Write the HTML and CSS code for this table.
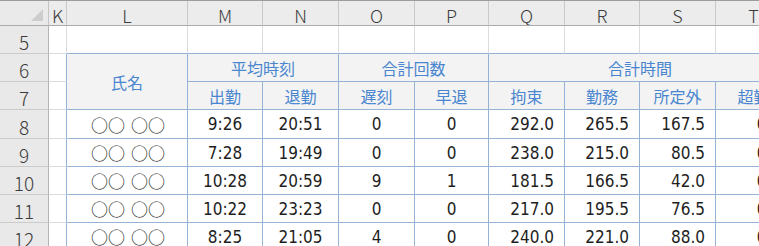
FILE: index.html
```html
<!DOCTYPE html>
<html lang="ja">
<head>
<meta charset="utf-8">
<title>勤怠集計</title>
<link rel="stylesheet" href="styles.css">
</head>
<body>
<div class="sheet">
  <div class="corner"><span class="tri"></span></div>
  <div class="colhead">K</div>
  <div class="colhead">L</div>
  <div class="colhead">M</div>
  <div class="colhead">N</div>
  <div class="colhead">O</div>
  <div class="colhead">P</div>
  <div class="colhead">Q</div>
  <div class="colhead">R</div>
  <div class="colhead">S</div>
  <div class="colhead">T</div>

  <div class="rowhead">5</div>
  <div class="cell"></div>
  <div class="cell top"></div>
  <div class="cell top"></div>
  <div class="cell top"></div>
  <div class="cell top"></div>
  <div class="cell top"></div>
  <div class="cell top"></div>
  <div class="cell top"></div>
  <div class="cell top"></div>
  <div class="cell top"></div>

  <div class="rowhead">6</div>
  <div class="cell kcol"></div>
  <div class="th rows2">氏名</div>
  <div class="th span2">平均時刻</div>
  <div class="th span2">合計回数</div>
  <div class="th span4">合計時間</div>

  <div class="rowhead">7</div>
  <div class="cell kcol"></div>
  <div class="th">出勤</div>
  <div class="th">退勤</div>
  <div class="th">遅刻</div>
  <div class="th">早退</div>
  <div class="th">拘束</div>
  <div class="th">勤務</div>
  <div class="th">所定外</div>
  <div class="th">超勤</div>

  <div class="rowhead">8</div>
  <div class="cell kcol"></div>
  <div class="td name">○○ ○○</div>
  <div class="td c">9:26</div>
  <div class="td c">20:51</div>
  <div class="td c">0</div>
  <div class="td c">0</div>
  <div class="td r">292.0</div>
  <div class="td r">265.5</div>
  <div class="td r">167.5</div>
  <div class="td r">0.0</div>

  <div class="rowhead">9</div>
  <div class="cell kcol"></div>
  <div class="td name">○○ ○○</div>
  <div class="td c">7:28</div>
  <div class="td c">19:49</div>
  <div class="td c">0</div>
  <div class="td c">0</div>
  <div class="td r">238.0</div>
  <div class="td r">215.0</div>
  <div class="td r">80.5</div>
  <div class="td r">0.0</div>

  <div class="rowhead">10</div>
  <div class="cell kcol"></div>
  <div class="td name">○○ ○○</div>
  <div class="td c">10:28</div>
  <div class="td c">20:59</div>
  <div class="td c">9</div>
  <div class="td c">1</div>
  <div class="td r">181.5</div>
  <div class="td r">166.5</div>
  <div class="td r">42.0</div>
  <div class="td r">0.0</div>

  <div class="rowhead">11</div>
  <div class="cell kcol"></div>
  <div class="td name">○○ ○○</div>
  <div class="td c">10:22</div>
  <div class="td c">23:23</div>
  <div class="td c">0</div>
  <div class="td c">0</div>
  <div class="td r">217.0</div>
  <div class="td r">195.5</div>
  <div class="td r">76.5</div>
  <div class="td r">0.0</div>

  <div class="rowhead">12</div>
  <div class="cell kcol"></div>
  <div class="td name">○○ ○○</div>
  <div class="td c">8:25</div>
  <div class="td c">21:05</div>
  <div class="td c">4</div>
  <div class="td c">0</div>
  <div class="td r">240.0</div>
  <div class="td r">221.0</div>
  <div class="td r">88.0</div>
  <div class="td r">0.0</div>
</div>
</body>
</html>
```

FILE: styles.css
```css
html, body {
  margin: 0;
  padding: 0;
  background: #ffffff;
  overflow: hidden;
}

.sheet {
  display: grid;
  grid-template-columns: 49px 18px 121px 75px 76px 76px 74px 76px 75px 76px 76px;
  grid-template-rows: 25px 28px 28px 28px 29px 28px 28px 28px 28px;
  width: 792px;
  border-top: 1px solid #9c9c9c;
}

.sheet > div {
  box-sizing: border-box;
  border-right: 1px solid #dadcdd;
  border-bottom: 1px solid #dadcdd;
  display: flex;
  align-items: center;
  justify-content: center;
  white-space: nowrap;
  overflow: hidden;
}

.corner {
  background: #eaeaea;
  position: relative;
  border-right-color: #c4c4c4 !important;
  border-bottom-color: #ababab !important;
}

.tri {
  position: absolute;
  right: 5px;
  bottom: 4px;
  width: 0;
  height: 0;
  border-left: 12px solid transparent;
  border-bottom: 12px solid #cdcdcd;
}

.colhead {
  background: #ececec;
  border-right-color: #c9c9c9 !important;
  border-bottom-color: #ababab !important;
  font-family: "Noto Sans CJK JP", "Noto Sans", sans-serif;
  font-size: 18px;
  font-weight: 300;
  color: #3c3c3c;
  padding-top: 3px;
}

.rowhead {
  background: #e9e9e9;
  border-right-color: #b4b4b4 !important;
  border-bottom-color: #cbcbcb !important;
  font-family: "Noto Sans CJK JP", "Noto Sans", sans-serif;
  font-size: 19px;
  font-weight: 300;
  color: #3c3c3c;
  padding-top: 4px;
}

.cell.top {
  border-bottom-color: #95b3d7;
}

.cell.kcol {
  border-right-color: #95b3d7;
}

.th {
  background: #f3f3f3;
  border-right-color: #95b3d7 !important;
  border-bottom-color: #95b3d7 !important;
  font-family: "Noto Sans CJK JP", sans-serif;
  font-size: 16px;
  color: #4a86cf;
}

.rows2 { grid-row: span 2; }
.span2 { grid-column: span 2; }
.span4 { grid-column: span 4; }

.td {
  border-right-color: #95b3d7 !important;
  border-bottom-color: #95b3d7 !important;
  font-family: "DejaVu Sans Condensed", "DejaVu Sans", sans-serif;
  font-stretch: condensed;
  font-size: 17px;
  color: #1e1e1e;
}

.td.name {
  font-family: "Noto Sans CJK JP", sans-serif;
  font-size: 17px;
  word-spacing: 2px;
  color: #1e1e1e;
  font-weight: 400;
  padding-left: 2px;
}

.td.r {
  justify-content: flex-end;
  padding-right: 10px;
}
```
